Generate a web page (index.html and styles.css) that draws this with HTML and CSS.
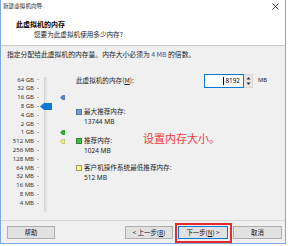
FILE: index.html
```html
<!DOCTYPE html>
<html lang="zh">
<head>
<meta charset="utf-8">
<link rel="stylesheet" href="styles.css">
</head>
<body>
<div class="window">
  <div class="titlebar">
    <span class="title">新建虚拟机向导</span>
    <svg class="close" width="7" height="7" viewBox="0 0 7 7"><path d="M0.5 0.5 L6.5 6.5 M6.5 0.5 L0.5 6.5" stroke="#333" stroke-width="0.9"/></svg>
  </div>
  <div class="header">
    <div class="h-title">此虚拟机的内存</div>
    <div class="h-sub">您要为此虚拟机使用多少内存?</div>
  </div>
  <div class="content">
    <div class="intro">指定分配给此虚拟机的内存量。内存大小必须为 <span class="hl">4 MB</span> 的倍数。</div>
    <div class="main">
      <div class="scale">
        <span class="lbl" style="grid-row:1">64 GB</span><i class="tick" style="grid-row:1"></i>
        <span class="lbl" style="grid-row:2">32 GB</span><i class="tick" style="grid-row:2"></i>
        <span class="lbl" style="grid-row:3">16 GB</span><i class="tick" style="grid-row:3"></i>
        <span class="lbl" style="grid-row:4">8 GB</span><i class="tick" style="grid-row:4"></i>
        <span class="lbl" style="grid-row:5">4 GB</span><i class="tick" style="grid-row:5"></i>
        <span class="lbl" style="grid-row:6">2 GB</span><i class="tick" style="grid-row:6"></i>
        <span class="lbl" style="grid-row:7">1 GB</span><i class="tick" style="grid-row:7"></i>
        <span class="lbl" style="grid-row:8">512 MB</span><i class="tick" style="grid-row:8"></i>
        <span class="lbl" style="grid-row:9">256 MB</span><i class="tick" style="grid-row:9"></i>
        <span class="lbl" style="grid-row:10">128 MB</span><i class="tick" style="grid-row:10"></i>
        <span class="lbl" style="grid-row:11">64 MB</span><i class="tick" style="grid-row:11"></i>
        <span class="lbl" style="grid-row:12">32 MB</span><i class="tick" style="grid-row:12"></i>
        <span class="lbl" style="grid-row:13">16 MB</span><i class="tick" style="grid-row:13"></i>
        <span class="lbl" style="grid-row:14">8 MB</span><i class="tick" style="grid-row:14"></i>
        <span class="lbl" style="grid-row:15">4 MB</span><i class="tick" style="grid-row:15"></i>
        <div class="track"></div>
        <svg class="thumb" width="12" height="7" viewBox="0 0 12 7"><polygon points="0,3.5 4,0 12,0 12,7 4,7" fill="#0a78d4"/></svg>
        <svg class="marker" style="grid-row:3" width="5" height="5" viewBox="0 0 5 5"><polygon points="0,2.5 2.5,0 5,0 5,5 2.5,5" fill="#5b80bd"/></svg>
        <svg class="marker" style="grid-row:7" width="5" height="5" viewBox="0 0 5 5"><polygon points="0,2.5 2.5,0 5,0 5,5 2.5,5" fill="#35a83a"/></svg>
        <svg class="marker" style="grid-row:8" width="5" height="5" viewBox="0 0 5 5"><polygon points="0.4,2.5 2.6,0.4 4.6,0.4 4.6,4.6 2.6,4.6" fill="#f3f07a" stroke="#9a9a50" stroke-width="0.6"/></svg>
      </div>
      <div class="info">
        <div class="mem-row">
          <span class="mem-label">此虚拟机的内存(<u>M</u>):</span>
          <div class="spin">
            <div class="field"><i class="caret"></i>8192</div>
            <div class="spin-btns">
              <svg width="9" height="6" viewBox="0 0 9 6"><polygon points="4.5,2 6.5,4.5 2.5,4.5" fill="#333"/></svg>
              <svg width="9" height="6" viewBox="0 0 9 6"><polygon points="2.5,1.5 6.5,1.5 4.5,4" fill="#333"/></svg>
            </div>
          </div>
          <span class="unit">MB</span>
        </div>
        <div class="legend leg-max">
          <i class="sq sq-blue"></i>
          <div><div>最大推荐内存:</div><div>13744 MB</div></div>
        </div>
        <div class="legend leg-rec">
          <i class="sq sq-green"></i>
          <div><div>推荐内存:</div><div>1024 MB</div></div>
        </div>
        <div class="legend leg-min">
          <i class="sq sq-yellow"></i>
          <div><div>客户机操作系统最低推荐内存:</div><div>512 MB</div></div>
        </div>
      </div>
    </div>
  </div>
  <div class="footer">
    <button class="btn btn-help">帮助</button>
    <button class="btn btn-back">&lt; 上一步(<u>B</u>)</button>
    <button class="btn btn-next">下一步(<u>N</u>) &gt;</button>
    <button class="btn btn-cancel">取消</button>
  </div>
  <div class="annot-text">设置内存大小。</div>
  <div class="annot-box"></div>
</div>
</body>
</html>
```
FILE: styles.css
```css
* { box-sizing: border-box; margin: 0; padding: 0; }
html, body { width: 288px; height: 246px; background: #ffffff; overflow: hidden; }
body { font-family: "Noto Sans CJK SC", "Noto Sans", sans-serif; color: #1a1a1a; }

.window {
  position: relative;
  width: 286px;
  height: 244px;
  border: 1px solid #7fa9dc;
  border-top: 0;
  display: flex;
  flex-direction: column;
  background: #f0f0f0;
}

.titlebar {
  height: 13px;
  background: #ffffff;
  display: flex;
  align-items: center;
  justify-content: space-between;
  padding: 0 6px 0 2px;
}
.title { font-size: 5.6px; color: #222; line-height: 1; }
.close { display: block; }

.header {
  height: 33px;
  background: #ffffff;
  border-bottom: 1px solid #c9c9c9;
  padding: 6px 0 0 15px;
}
.h-title { font-size: 7px; font-weight: 700; line-height: 10px; color: #000; }
.h-sub { font-size: 6.6px; line-height: 10px; margin-left: 18px; color: #222; }

.content { flex: 1; display: flex; flex-direction: column; border-bottom: 1px solid #d6d6d6; }
.intro { font-size: 6.8px; line-height: 9px; padding: 4px 0 0 6px; color: #222; }
.hl { color: #2a58a6; }

.main { display: flex; margin-top: 15px; }

.scale {
  display: grid;
  grid-template-columns: 33px 7px 11px 15px;
  grid-template-rows: repeat(15, 8.8px);
  padding-top: 1.6px;
}
.lbl {
  grid-column: 1;
  font-family: "Noto Sans", sans-serif;
  font-size: 6px;
  line-height: 8.8px;
  text-align: right;
  color: #333;
  white-space: nowrap;
}
.tick {
  grid-column: 2;
  align-self: center;
  justify-self: center;
  width: 2px;
  height: 1px;
  background: #b8b8b8;
}
.track {
  grid-column: 3;
  grid-row: 1 / -1;
  justify-self: start;
  margin: 1px 0 -4px 3px;
  width: 3px;
  background: #e4e4e4;
  border-left: 1px solid #d2d2d2;
}
.thumb { grid-column: 2 / 4; grid-row: 4; align-self: center; justify-self: end; display: block; }
.marker { grid-column: 4; align-self: center; justify-self: start; margin-left: 8px; display: block; }

.info { flex: 1; padding-left: 9px; font-size: 6.6px; line-height: 9.5px; color: #222; }
.mem-row { display: flex; align-items: center; height: 14px; }
.mem-label { width: 128px; }
.spin { display: flex; height: 14px; }
.field {
  width: 40px;
  height: 14px;
  background: #fff;
  border: 1px solid #0a78d4;
  display: flex;
  align-items: center;
  justify-content: flex-end;
  padding-right: 3px;
  font-family: "Noto Sans", sans-serif;
  font-size: 6.4px;
  color: #000;
}
.caret { width: 1px; height: 8px; background: #000; margin-right: 1px; }
.spin-btns {
  width: 9px;
  display: flex;
  flex-direction: column;
  background: #e6e6e6;
  border: 1px solid #d8d8d8;
  border-left: 0;
}
.spin-btns svg { display: block; flex: 1; }
.unit { margin-left: 5px; font-family: "Noto Sans", sans-serif; font-size: 5.8px; }

.legend { display: flex; align-items: flex-start; }
.leg-max { margin-top: 19px; }
.leg-rec { margin-top: 10px; }
.leg-min { margin-top: 8px; }
.legend > div > div:last-child { font-family: "Noto Sans", sans-serif; font-size: 6.5px; }
.sq { width: 6px; height: 6px; margin: 1.8px 2px 0 0; border: 1px solid #666; flex: none; }
.sq-blue { background: #7d9bd0; border-color: #5673a8; }
.sq-green { background: #42b848; border-color: #2d8a33; }
.sq-yellow { background: #f5f48c; border-color: #9a9a60; }

.footer {
  height: 22px;
  display: flex;
  align-items: center;
  padding: 0 3px 0 6px;
}
.btn {
  height: 13px;
  font-family: "Noto Sans CJK SC", sans-serif;
  font-size: 6.4px;
  line-height: 11px;
  color: #111;
  background: #e1e1e1;
  border: 1px solid #adadad;
}
.btn-help { width: 48px; }
.btn-back { width: 48px; margin-left: auto; }
.btn-next { width: 50px; margin-left: 5px; border-color: #0a78d4; }
.btn-cancel { width: 49px; margin-left: 5px; }

.annot-text {
  position: absolute;
  left: 142px;
  top: 131px;
  font-size: 11px;
  line-height: 14px;
  color: #f23b3b;
  white-space: nowrap;
}
.annot-box {
  position: absolute;
  left: 174px;
  top: 223px;
  width: 57px;
  height: 20px;
  border: 2px solid #e52a2a;
}
```
